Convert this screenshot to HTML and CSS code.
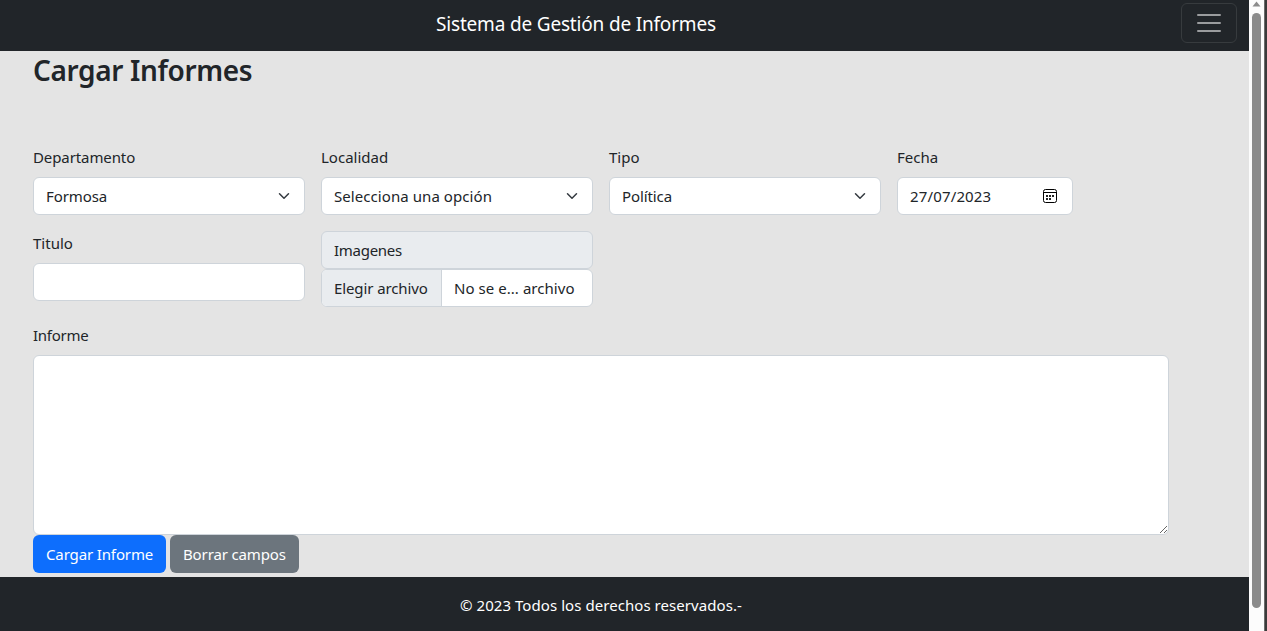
FILE: index.html
```html
<!DOCTYPE html>
<html lang="es">
<head>
<meta charset="utf-8">
<title>Sistema de Gestión de Informes</title>
<link rel="stylesheet" href="styles.css">
</head>
<body>
<div class="page">
  <header class="navbar">
    <span class="brand">Sistema de Gestión de Informes</span>
    <button class="toggler" aria-label="Menú"><svg width="30" height="30" viewBox="0 0 30 30"><path stroke="#fff" stroke-opacity=".55" stroke-linecap="round" stroke-miterlimit="10" stroke-width="2" d="M4 7h22M4 15h22M4 23h22"/></svg></button>
  </header>
  <main class="content">
    <h2 class="heading">Cargar Informes</h2>
    <form class="form">
      <div class="row">
        <div class="col">
          <span class="label snug">Departamento</span>
          <div class="control"><span class="snug">Formosa</span><svg class="chevron" width="16" height="12" viewBox="0 0 16 16"><path fill="none" stroke="#343a40" stroke-linecap="round" stroke-linejoin="round" stroke-width="2" d="m2 5 6 6 6-6"/></svg></div>
        </div>
        <div class="col">
          <span class="label">Localidad</span>
          <div class="control"><span class="loose">Selecciona una opción</span><svg class="chevron" width="16" height="12" viewBox="0 0 16 16"><path fill="none" stroke="#343a40" stroke-linecap="round" stroke-linejoin="round" stroke-width="2" d="m2 5 6 6 6-6"/></svg></div>
        </div>
        <div class="col">
          <span class="label">Tipo</span>
          <div class="control"><span class="snug">Política</span><svg class="chevron" width="16" height="12" viewBox="0 0 16 16"><path fill="none" stroke="#343a40" stroke-linecap="round" stroke-linejoin="round" stroke-width="2" d="m2 5 6 6 6-6"/></svg></div>
        </div>
        <div class="col col-date">
          <span class="label">Fecha</span>
          <div class="control"><span class="date">27/07/2023</span><svg class="calendar" width="16" height="16" viewBox="0 0 16 16"><rect x="1.5" y="1.5" width="13" height="13" rx="2" fill="none" stroke="#000"/><path d="M2 4.5h12" stroke="#000"/><path d="M4 7h2v2H4zM7 7h2v2H7zM10 7h2v2h-2zM4 10h2v2H4zM7 10h2v2H7z" fill="#222"/></svg></div>
        </div>
      </div>
      <div class="row row-second">
        <div class="col">
          <span class="label">Titulo</span>
          <input class="control" type="text" aria-label="Titulo">
        </div>
        <div class="col">
          <div class="control addon"><span class="tight">Imagenes</span></div>
          <div class="control file"><span class="file-button snug">Elegir archivo</span><span class="file-name">No se e... archivo</span></div>
        </div>
      </div>
      <span class="label tight">Informe</span>
      <textarea class="report" aria-label="Informe"></textarea>
      <div class="actions">
        <button type="button" class="btn primary">Cargar Informe</button>
        <button type="button" class="btn secondary">Borrar campos</button>
      </div>
    </form>
  </main>
  <footer class="footer">© 2023 Todos los derechos reservados.-</footer>
</div>
<div class="scrollbar"><svg width="9" height="6" viewBox="0 0 9 6"><path d="M4.5 0.5 8.5 5.5h-8z" fill="#8b8b8b"/></svg><div class="thumb"></div></div>
<div class="edge"></div>
</body>
</html>
```
FILE: styles.css
```css
* { box-sizing: border-box; }
body {
  margin: 0;
  height: 631px;
  display: flex;
  overflow: hidden;
  background: #e4e4e4;
  color: #212529;
  font: 15px/24px "Noto Sans", "Open Sans", sans-serif;
  white-space: nowrap;
}
.page { width: 1249px; display: flex; flex-direction: column; }
.navbar {
  height: 51px;
  flex: none;
  display: flex;
  align-items: flex-start;
  justify-content: space-between;
  padding: 3px 12px 0 436px;
  background: #212529;
  color: #fff;
}
.brand {
  padding-top: 6px;
  font-size: 19px;
  line-height: 30px;
  letter-spacing: -0.18px;
}
.toggler {
  width: 56px;
  height: 40px;
  padding: 4px 12px;
  border: 1px solid #373b3e;
  border-radius: 6px;
  background: none;
}
.toggler svg { display: block; }
.content { height: 526px; padding: 0 80px 0 33px; }
.heading {
  margin: 0;
  height: 94px;
  font-size: 28px;
  line-height: 38px;
  font-weight: 600;
  letter-spacing: -0.35px;
}
.row { display: flex; gap: 16px; height: 86px; }
.row-second { height: 92px; }
.col { width: 272px; }
.col-date { width: 176px; }
.label { display: block; width: max-content; height: 32px; }
.snug { letter-spacing: -0.1px; }
.tight { letter-spacing: -0.27px; }
.loose { letter-spacing: 0.07px; }
.date { letter-spacing: 0.15px; }
.control {
  display: flex;
  align-items: center;
  justify-content: space-between;
  width: 100%;
  height: 38px;
  padding: 0 12px;
  border: 1px solid #ced4da;
  border-radius: 6px;
  background: #fff;
}
.calendar { margin-right: 2px; }
.addon { background: #e9ecef; }
.file { padding: 0; overflow: hidden; justify-content: flex-start; }
.file-button {
  width: 120px;
  height: 100%;
  padding: 6px 12px;
  background: #e9ecef;
  border-right: 1px solid #ced4da;
}
.file-name { padding-left: 12px; letter-spacing: 0.05px; }
.report {
  display: block;
  width: 1136px;
  height: 180px;
  border: 1px solid #ced4da;
  border-radius: 6px;
  background: #fff;
  resize: both;
}
.actions { display: flex; gap: 4px; }
.btn {
  height: 38px;
  padding: 0 0 0 13px;
  border: 0;
  border-radius: 6px;
  color: #fff;
  font: inherit;
  letter-spacing: -0.13px;
  text-align: left;
}
.primary { width: 133px; background: #0d6efd; }
.secondary { width: 129px; background: #6c757d; }
.footer {
  height: 54px;
  padding: 16px 0 0 460px;
  background: #212529;
  color: #fff;
  letter-spacing: 0.06px;
}
.scrollbar {
  width: 15px;
  display: flex;
  flex-direction: column;
  align-items: center;
  padding-top: 1px;
  background: #fcfcfc;
}
.thumb { width: 9px; height: 595px; margin-top: 6px; border-radius: 5px; background: #8b8b8b; }
.edge { width: 3px; border-left: 1px solid #6b6b6b; background: #3a3a3a; }
```
